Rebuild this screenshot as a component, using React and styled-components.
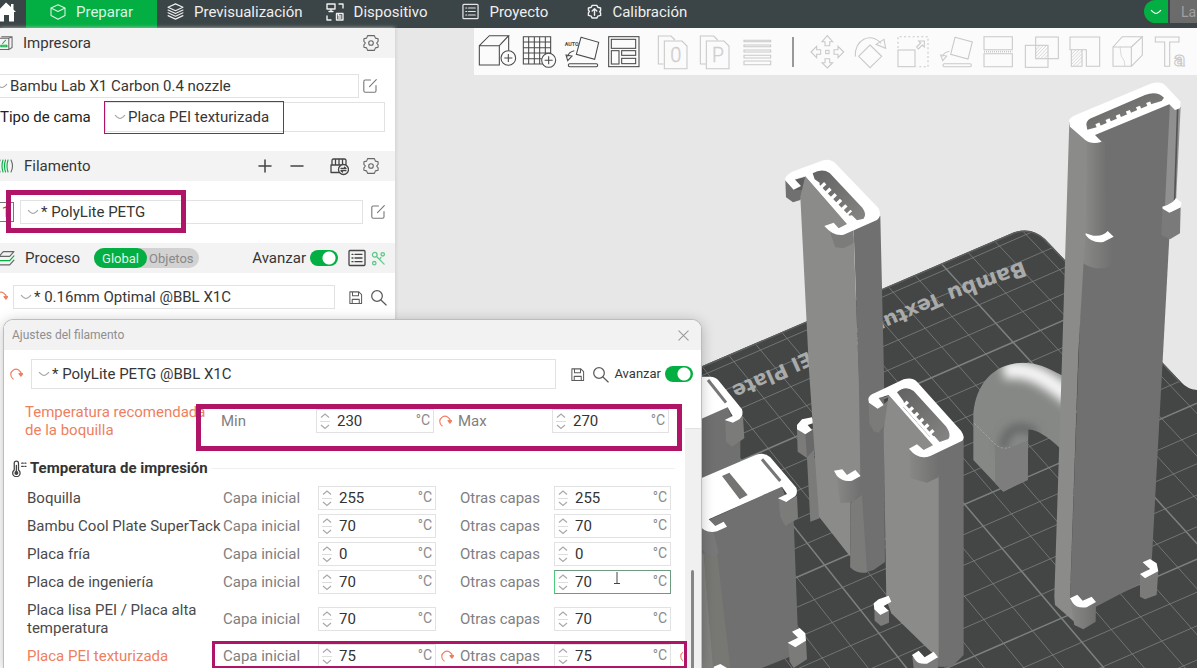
import React from "react";
import styled, { createGlobalStyle } from "styled-components";

const GREEN = "#03ae42";
const MAGENTA = "#b01466";
const ORANGE = "#ee7f61";

const GlobalStyle = createGlobalStyle`
  * { box-sizing: border-box; }
  body { margin: 0; background: #e6e6e6; }
  body, button, input, select { font-family: Roboto, "Noto Sans", sans-serif; }
  button { border: 0; padding: 0; background: none; color: inherit; cursor: pointer; }
  svg { display: block; flex: none; }
`;

const Page = styled.div`
  position: relative;
  display: flex;
  flex-direction: column;
  height: 100vh;
  overflow: hidden;
  font-size: 15px;
  line-height: 18px;
  color: #363636;
`;

/* ---------- top navigation ---------- */

const TopBar = styled.nav`
  display: flex;
  height: 28px;
  flex: none;
  background: #3b4446;
  color: #efefef;
  overflow: hidden;
`;

const HomeButton = styled.button`
  width: 26px;
  padding-bottom: 5px;
`;

const Tab = styled.button`
  display: flex;
  align-items: center;
  gap: 10px;
  padding: 0 ${(p) => p.$right || 24}px 5px ${(p) => p.$left || 0}px;
  font-size: 15px;
  line-height: 18px;
  white-space: nowrap;
  color: ${(p) => (p.$active ? "#d9f5e2" : "#efefef")};
  background: ${(p) => (p.$active ? GREEN : "transparent")};
  margin-right: ${(p) => (p.$active ? 10 : 0)}px;
`;

const SliceGroup = styled.div`
  display: flex;
  gap: 2px;
  height: 23px;
  margin-left: auto;
  flex: none;
`;

const SliceMenu = styled.button`
  display: grid;
  place-items: center;
  width: 24px;
  background: ${GREEN};
  border-radius: 12px 0 0 12px;
`;

const SliceButton = styled.button`
  width: 27px;
  padding-left: 11px;
  text-align: left;
  background: #6b6b6b;
  color: #a0a0a0;
  font-size: 14px;
`;

/* ---------- body ---------- */

const Body = styled.div`
  display: flex;
  flex: 1;
  min-height: 0;
`;

const SidebarClip = styled.aside`
  width: 395px;
  flex: none;
  overflow: hidden;
  background: #fff;
  z-index: 1;
  box-shadow: 0 0 4px #c4c4c4;
`;

const SidebarInner = styled.div`
  margin-left: -8px;
`;

const SectionHead = styled.header`
  display: flex;
  align-items: center;
  height: 30px;
  padding: 0 ${(p) => p.$right || 15}px 0 6px;
  background: #f3f3f3;
  gap: 10px;
`;

const SectionTitle = styled.h2`
  margin: 0 ${(p) => (p.$tight ? "4px" : "auto")} 0 0;
  font-size: 15px;
  font-weight: 400;
`;

const IconButton = styled.button`
  display: grid;
  place-items: center;
  width: 18px;
  height: 20px;
  margin-left: ${(p) => p.$space || 0}px;
  flex: none;
`;

const HeadActions = styled.div`
  display: flex;
  align-items: center;
  gap: 3px;
`;

const FieldRow = styled.div`
  position: relative;
  display: flex;
  align-items: center;
  padding-left: ${(p) => p.$left || 0}px;
  padding-right: ${(p) => p.$right || 16}px;
  gap: ${(p) => p.$gap || 0}px;
`;

const SectionBody = styled.div`
  display: flex;
  flex-direction: column;
  gap: 4px;
  padding: ${(p) => p.$top || 16}px 0 ${(p) => p.$bottom || 19}px;
`;

const ComboBox = styled.div`
  display: flex;
  align-items: center;
  flex: 1;
  min-width: 0;
  height: ${(p) => p.$height || 24}px;
  padding-left: ${(p) => p.$pad || 6}px;
  border: 1px solid #e2e2e2;
  background: #fff;
  gap: 2px;

  select {
    appearance: none;
    flex: 1;
    min-width: 0;
    border: 0;
    padding: 0;
    outline: 0;
    background: transparent;
    color: #363636;
    font-size: 15px;
  }
`;

const BedLabel = styled.label`
  width: 105px;
  color: #222;
`;

const Highlight = styled.span`
  position: absolute;
  pointer-events: none;
  border: ${(p) => p.$line}px solid ${MAGENTA};
  z-index: 2;
`;

const BedHighlight = styled(Highlight)`
  left: 112px;
  top: -1px;
  bottom: -2px;
  width: 180px;
`;

const FilamentHighlight = styled(Highlight)`
  left: 14px;
  top: -10px;
  bottom: -9px;
  width: 180px;
`;

const FilamentNumber = styled.span`
  display: grid;
  place-items: center;
  width: 16px;
  height: 20px;
  border: 1px solid #777;
  color: #b4571f;
`;

const Segmented = styled.div`
  display: flex;
  height: 20px;
  border-radius: 10px;
  background: #d2d2d2;
  margin-right: auto;
`;

const Segment = styled.button`
  height: 20px;
  padding: 0 ${(p) => (p.$on ? 8 : 5)}px 0 ${(p) => (p.$on ? 8 : 2)}px;
  border-radius: 10px;
  font-size: 13px;
  background: ${(p) => (p.$on ? GREEN : "transparent")};
  color: ${(p) => (p.$on ? "#dff7e6" : "#888")};
`;

const SwitchLabel = styled.label`
  display: flex;
  align-items: center;
  gap: 4px;
  font-size: ${(p) => p.$size || 15}px;

  input {
    appearance: none;
    width: 28px;
    height: 16px;
    margin: 0;
    border-radius: 8px;
    background: radial-gradient(circle at 19px 8px, #fff 6px, ${GREEN} 7px);
  }
`;

/* ---------- viewport ---------- */

const Viewport = styled.main`
  position: relative;
  flex: 1;
  min-width: 0;
  overflow: hidden;
  background: #e7e7e7;
`;

const Scene = styled.svg`
  position: absolute;
  inset: 0;
  width: 100%;
  height: 100%;
`;

const Toolbar = styled.div`
  position: relative;
  display: flex;
  align-items: center;
  height: 47px;
  margin-left: 79px;
  background: #fbfbfb;
  overflow: hidden;
`;

const ToolGroup = styled.div`
  display: flex;
  flex: none;
  margin-right: 5px;
`;

const ToolButton = styled.button`
  width: 43px;
  height: 42px;
  flex: none;
  color: ${(p) => (p.$muted ? "#c9c9c9" : "#4a4a4a")};
`;

const Separator = styled.span`
  width: 2px;
  height: 30px;
  margin: 0 12px 0 7px;
  background: #999;
  flex: none;
`;

/* ---------- dialog ---------- */

const Dialog = styled.section`
  position: absolute;
  left: 4px;
  top: 320px;
  bottom: 0;
  width: 697px;
  display: flex;
  flex-direction: column;
  border-radius: 9px 9px 0 0;
  background: #fff;
  box-shadow: 0 0 0 1px #bdbdbd, 0 2px 14px #0004;
  overflow: hidden;
  z-index: 3;
`;

const DialogTitle = styled.header`
  display: flex;
  align-items: center;
  justify-content: space-between;
  height: 30px;
  flex: none;
  padding: 0 10px 0 8px;
  background: #f2f2f2;
  color: #8f8f8f;
  font-size: 12px;
`;

const PresetRow = styled.div`
  display: flex;
  align-items: center;
  height: 48px;
  flex: none;
  padding: 0 8px 0 5px;
  gap: 8px;
`;

const PresetTools = styled.div`
  display: flex;
  align-items: center;
  gap: 5px;
  margin-left: 4px;
`;

const DialogBody = styled.div`
  display: flex;
  flex: 1;
  min-height: 0;
`;

const Settings = styled.div`
  flex: 1;
  min-width: 0;
  padding-top: 5px;
`;

const ScrollTrack = styled.div`
  width: 16px;
  margin-top: 30px;
  padding: 141px 0 0 6px;
  background: #f0f0f0;
  border-top: 1px solid #e2e2e2;
`;

const ScrollThumb = styled.div`
  width: 3px;
  height: 100%;
  background: #868686;
  border-radius: 2px 2px 0 0;
`;

const SettingRow = styled.div`
  position: relative;
  display: grid;
  grid-template-columns: 196px 95px 118px 24px 94px 117px;
  align-items: center;
  height: ${(p) => p.$height || 28}px;
  padding-left: ${(p) => p.$left || 23}px;
`;

const SettingName = styled.span`
  color: ${(p) => (p.$changed ? ORANGE : "#4a4a4a")};
  white-space: ${(p) => (p.$wrap ? "normal" : "nowrap")};
  padding-right: ${(p) => (p.$wrap ? 10 : 0)}px;
`;

const FieldLabel = styled.label`
  color: #808080;
  white-space: nowrap;
`;

const ResetSlot = styled.button`
  display: grid;
  place-items: center start;
  width: 20px;
  height: 20px;
  padding-left: 4px;
`;

const SpinBox = styled.div`
  display: flex;
  align-items: center;
  height: 24px;
  padding: 0 3px;
  border: 1px solid ${(p) => (p.$focus ? "#6d9a80" : "#e2e2e2")};
  border-left-color: ${(p) => (p.$focus ? "#4ccb7c" : "#e2e2e2")};
  background: #fff;

  input {
    flex: 1;
    width: 0;
    min-width: 0;
    border: 0;
    padding: 0 0 0 7px;
    outline: 0;
    background: transparent;
    color: #333;
    font-size: 15px;
  }
`;

const Steppers = styled.span`
  display: flex;
  flex-direction: column;
  width: 10px;

  button { height: 10px; }
  button + button { border-top: 1px solid #ddd; height: 11px; }
`;

const Unit = styled.span`
  color: #8a8a8a;
  font-size: 14px;
  padding-bottom: 2px;
`;

const GroupTitle = styled.h3`
  display: flex;
  align-items: center;
  gap: 3px;
  height: 28px;
  margin: 15px 10px 2px 6px;
  font-size: 15px;
  font-weight: 700;
  color: #333;

  &::after {
    content: "";
    flex: 1;
    height: 1px;
    background: #f0f0f0;
  }
`;

const RangeHighlight = styled(Highlight)`
  left: 192px;
  right: 3px;
  top: 1px;
  height: 47px;
`;

const PlateHighlight = styled(Highlight)`
  left: 208px;
  right: -2px;
  top: -1px;
  height: 28px;
`;

const RowReset = styled.span`
  position: absolute;
  right: 2px;
  width: 4px;
  overflow: hidden;
`;

const Beam = styled.svg`
  position: absolute;
  left: 609px;
  top: 3px;
`;

/* ---------- small icons ---------- */

const Icon = ({ size = 16, box = 16, sw = 1.1, color = "currentColor", children }) => (
  <svg width={size} height={size} viewBox={`0 0 ${box} ${box}`} fill="none" stroke={color}
    strokeWidth={sw} strokeLinecap="round" strokeLinejoin="round" aria-hidden="true">{children}</svg>
);

const Chevron = ({ color = "#a8a8a8" }) => (
  <svg width="12" height="8" viewBox="0 0 12 8" fill="none" stroke={color} strokeWidth="1.2" aria-hidden="true">
    <path d="M1 2.2 Q4 5.5 6 5.5 T11 2.2" />
  </svg>
);

const Gear = () => (
  <Icon size={18} box={18} color="#666">
    <path d="M5.6 1.6h6.8l1 2.5 2.7.6v2.6L14.6 9l1.5 1.8v2.5l-2.7.6-1 2.5H5.6l-1-2.5-2.7-.6v-2.5L3.4 9 1.9 7.3V4.7l2.7-.6z" />
    <circle cx="9" cy="9" r="2.3" />
  </Icon>
);

const EditIcon = () => (
  <Icon color="#777">
    <path d="M8.5 2H3.2Q1.8 2 1.8 3.4v9.4q0 1.4 1.4 1.4h9.4q1.4 0 1.4-1.4V7.6M7.5 8.6l6.800-7" />
  </Icon>
);

const SaveIcon = () => (
  <Icon size={15} color="#5c5c5c">
    <path d="M2 2h9.5L14.5 5v9.500H2zM4.800 2.200v4h6.400v-4M4.500 14.300V10h7.500v4.300" />
  </Icon>
);

const SearchIcon = () => (
  <Icon size={17} color="#5c5c5c" sw={1.2}><circle cx="6.6" cy="6.6" r="5" /><path d="M10.3 10.3 15.2 15" /></Icon>
);

const ResetIcon = () => (
  <Icon size={14} color={ORANGE} sw={1.3}>
    <path d="M4.8 13.600A6 6 0 1 1 14 8.400" /><path d="M11.400 7.600h4.200l-2 2.900z" fill={ORANGE} />
  </Icon>
);

const ListIcon = ({ color, size = 18 }) => (
  <Icon size={size} box={18} color={color} sw={1.3}>
    <rect x="1" y="1.5" width="16" height="15" rx="1" />
    <path d="M4 5.300h1M7 5.300h7M4 9h1M7 9h7M4 12.700h1M7 12.700h7" />
  </Icon>
);

const StepIcon = ({ up }) => (
  <svg width="10" height="9" viewBox="0 0 10 9" fill="none" stroke="#a9a9a9" strokeWidth="1.2" aria-hidden="true">
    <path d={up ? "M1 6.5 5 3l4 3.500" : "M1 3 5 6.500 9 3"} />
  </svg>
);

/* ---------- toolbar drawings ---------- */

const toolDrawings = {
  add: [223, <>
    <path d="M238 137h60v58h-60zM238 137l30-30h58l-28 30M326 107v45" />
    <circle cx="325" cy="174" r="22" fill="#fbfbfb" /><path d="M325 162v24M313 174h24" />
  </>],
  plate: [352, <>
    <path d="M370 110h82v82h-82zM386 110v82M403 110v82M419 110v82M436 110v82M370 126h82M370 143h82M370 159h82M370 176h82" />
    <circle cx="446" cy="181" r="21" fill="#fbfbfb" /><path d="M446 169v24M434 181h24" />
  </>],
  auto: [481, <>
    <path d="M543 112l53 15-12 51-55-15zM523 152q-18 4-20 18M498 165l18 3-13 14z" />
    <rect x="505" y="191" width="88" height="9" rx="4" />
    <text x="494" y="137" fontSize="16" fontWeight="700" fill="currentColor" stroke="none">AUTO</text>
  </>],
  arrange: [610, <>
    <rect x="626" y="110" width="91" height="90" /><rect x="634" y="118" width="73" height="27" />
    <rect x="634" y="152" width="23" height="40" /><rect x="665" y="152" width="42" height="14" /><rect x="665" y="175" width="42" height="16" />
  </>],
  objects: [754, <>
    <path d="M790 192h-15v-84h38l12 12M793 123h53l15 15v68h-68z" />
    <text x="811" y="187" fontSize="60" fontWeight="300" fill="#d2d2d2" strokeWidth="1">0</text>
  </>],
  parts: [883, <>
    <path d="M918 192h-17v-84h40l12 12M919 123h53l15 15v68h-68z" />
    <text x="936" y="186" fontSize="58" fontWeight="300" fill="#d2d2d2" strokeWidth="1">P</text>
  </>],
  layers: [1012, <>
    <path d="M1032 121h80v4h-80zM1032 135h80v5h-80zM1032 150h80v6h-80zM1032 166h80v8h-80zM1032 183h80v11h-80z" />
  </>],
  move: [29, <>
    <path d="M92 107l16 18h-9v12H85v-12h-9zM92 204l16-16h-9v-12H85v12h-9zM43 156l17-17v10h12v14H60v10zM141 156l-17-17v10h-12v14h12v10z" />
    <rect x="87" y="151" width="10" height="10" />
  </>],
  rotate: [158, <>
    <path d="M220 135l35 34-35 34-34-34zM176 170c-4-50 46-76 77-40M238 133l24-15 5 27z" />
  </>],
  scale: [287, <>
    <rect x="304" y="150" width="51" height="50" /><path strokeDasharray="6 7" d="M304 144v-34h90v90h-34" />
    <path d="M360 141l12-12-6-6h17v18l-6-6-12 12z" />
  </>],
  flatten: [416, <>
    <path d="M475 112l52 14-13 51-52-14zM458 154q-18 4-20 16M432 165l18 3-12 14z" /><rect x="439" y="191" width="85" height="9" rx="4" />
  </>],
  cut: [545, <>
    <path d="M562 110h85v39h-85zM562 161h85v39h-85z" /><path strokeDasharray="3 3" strokeWidth="5" d="M562 155h85" />
  </>],
  boolean: [674, <>
    <rect x="717" y="111" width="68" height="65" /><rect x="686" y="136" width="68" height="66" />
    <path strokeWidth="2" d="M717 150l13-14M717 160l23-24M717 170l33-34M722 176l32-34M732 176l22-23M742 176l12-12" />
  </>],
  support: [803, <>
    <path d="M820 149v-38h89v88h-40v-50zM824 149h32v50h-32z" />
    <path strokeWidth="2" d="M824 164l14-15M824 174l24-25M824 184l32-33M824 194l32-33M829 199l27-28M839 199l17-18" />
  </>],
  seam: [932, <>
    <path d="M949 141h55v58h-55zM949 141l28-31h60l-33 31M1037 110v55l-33 34" />
    <path strokeWidth="2" d="M970 141l4 28 8 12 3 18" />
  </>],
  text: [1061, <>
    <path d="M1076 111h71v15h-28v73h-15v-73h-28z" />
    <text x="1132" y="199" fontSize="62" fontWeight="700" fill="none">a</text>
  </>],
};

const Tool = ({ name, muted, label }) => {
  const [x, art] = toolDrawings[name];
  return (
    <ToolButton $muted={muted} aria-label={label}>
      <svg width="43" height="42" viewBox={`${x - 1} 93 129 126`} fill="none" stroke="currentColor" strokeWidth="3.2">{art}</svg>
    </ToolButton>
  );
};

/* ---------- 3D scene ---------- */

const DARK = "#707070";
const LIGHT = "#8b8b89";
const MID = "#7b7b7a";

const edgeY = (x) => 367 - 0.429 * (x - 700);
const rowLines = Array.from({ length: 22 }, (_, n) => 262 + 24.3 * n + 0.3 * n * n);
const columnLines = Array.from({ length: 34 }, (_, n) => 1021 - 26.6 * n);

const P = ({ d, f = "#fff" }) => <path d={d} fill={f} />;

const PrintScene = () => (
  <Scene viewBox="395 28 802 640" preserveAspectRatio="xMinYMin slice" aria-label="Placa de impresión">
    <defs>
      <clipPath id="bed"><path d="M395 498 L1010 234 Q1030 225 1045 239 L1181 382 Q1187 389 1197 390 V668 H395Z" /></clipPath>
      <linearGradient id="hole" x1="0" y1="0" x2="1" y2="1"><stop offset="0" stopColor="#626262" /><stop offset="1" stopColor="#858583" /></linearGradient>
      <linearGradient id="round" x1="0" x2="1"><stop offset="0" stopColor="#888886" /><stop offset="1" stopColor={DARK} /></linearGradient>
      <filter id="soft" x="-50%" y="-50%" width="200%" height="200%"><feGaussianBlur stdDeviation="14" /></filter>
      <clipPath id="archShape"><path d="M100 330V190C110 90 170 40 250 38C310 40 340 65 368 76L360 295C330 265 290 238 265 238L263 390L190 425Z" /></clipPath>
    </defs>

    <g clipPath="url(#bed)">
      <rect x="395" y="200" width="802" height="468" fill="#434645" />
      <g stroke="#7d807f" fill="none">
        {rowLines.map((y, n) => (
          <path key={y} strokeWidth={n % 5 === 4 ? 1.5 : 0.8} d={`M395 ${y + 568 * 0.435}L1197 ${y - 234 * 0.435}`} />
        ))}
        {columnLines.map((x, n) => {
          const slope = 1.22 - (x - 733) * 0.0006;
          return <path key={x} strokeWidth={n % 5 === 3 ? 1.5 : 0.8} d={`M${x} ${edgeY(x)}L${x + 450 / slope} ${edgeY(x) + 450}`} />;
        })}
      </g>
      <path d="M395 498 L1010 234 Q1030 225 1045 239 L1181 382" fill="none" stroke="#5b5e5d" strokeWidth="3" />
      <g fill="#a9abaa" fontFamily="DejaVu Sans, sans-serif" fontWeight="700" fontSize="20">
        <text transform="translate(1023 261) rotate(160)" fontSize="21">Bambu</text>
        <text transform="translate(938 292) rotate(156)">Textured</text>
        <text transform="translate(822 345) rotate(156)">PEI</text>
        <text transform="translate(784 363) rotate(156)">Plate</text>
      </g>
    </g>

    <g transform="translate(940 350) scale(.3333)">
      <P f="#868886" d="M100 330V190C110 90 170 40 250 38C310 40 340 65 368 76L360 295C330 265 290 238 265 238L263 390L190 425Z" />
      <g clipPath="url(#archShape)">
        <path d="M190 62C270 50 320 85 400 150" fill="none" stroke="#f4f5f4" strokeWidth="52" filter="url(#soft)" />
        <path d="M188 300C192 240 230 215 290 250" fill="none" stroke="#5a5c5b" strokeWidth="20" filter="url(#soft)" />
        <P f="#7c7d7c" d="M165 282Q185 300 210 294L265 270V390L190 425L165 410Z" />
      </g>
      <path d="M103 220L165 282Q185 300 210 292" fill="none" stroke="#b0b2b0" strokeWidth="2" strokeDasharray="7 5" />
    </g>

    <g transform="translate(697 370) scale(.3333)">
      <P f={MID} d="M300 175L325 193L355 178L352 262L358 270L368 445L340 455L330 264L302 245Z" />
      <P f="#696969" d="M325 193L355 178V235L330 262Z" />
      <P d="M300 165L315 148L345 142L352 158L332 165L345 180L325 193L300 178Z" />
    </g>

    <g transform="translate(697 140) scale(.3333)">
      <P f={DARK} d="M265 120L290 148L322 125V155L310 180L288 187L267 172Z" />
      <P f="#5e5e5e" d="M290 120L325 110V150L290 150Z" />
      <P f={DARK} d="M470 270L550 228L561 700L564 1266L530 1290Q480 1308 460 1280L485 690Z" />
      <P f={LIGHT} d="M325 108L450 250L470 290L485 690L490 1000L460 1090V1250L366 1130L336 690L310 170Z" />
      <P f={MID} d="M460 1090L495 1065L510 1298Q480 1302 460 1283Z" />
      <P f="#7c7c7b" d="M400 280L470 268V310L440 325L415 322Z" />
      <P d="M264 120Q265 106 285 95L375 62Q400 54 415 70L545 205Q555 230 540 240L440 284Q410 290 382 258L410 248L425 265L450 252L325 108L293 118L312 138L290 149Z" />
      <P f="url(#hole)" d="M347 100Q375 84 398 99L496 203Q510 222 500 236L480 241L465 226L452 228L367 140L368 128L353 118Z" />
      <path d="M359 132L455 232" stroke="#fff" strokeWidth="9" fill="none" />
      <path d="M374 133L458 221" stroke="#fff" strokeWidth="20" strokeDasharray="10 13" fill="none" />
    </g>

    <g transform="translate(697 370) scale(.3333)">
      <P f="url(#round)" d="M418 322L440 332L490 318V370L470 396L430 400Z" />
      <P d="M411 302L436 298L450 315L475 300L491 318L465 332Q440 338 420 318Z" />

      <P f={MID} d="M515 95L545 115L575 90V150L545 188L530 184L517 160Z" />
      <P f={DARK} d="M708 240L800 208V855L765 890L723 890V320Z" />
      <P f={LIGHT} d="M575 75L708 225L725 320V868L583 730L568 690L560 180Z" />
      <P f="url(#round)" d="M637 240L680 263L725 245V322L690 338L640 325Z" />
      <P d="M514 88Q515 75 535 68L620 28Q645 20 660 35L792 182Q806 203 796 212L700 258Q665 272 636 236L660 223L680 240L708 226L575 75L545 84L560 105L542 116L516 98Z" />
      <P f="url(#hole)" d="M600 67Q625 45 650 63L748 170Q764 195 754 207L728 216L712 198L698 200L618 110L620 94Z" />
      <path d="M600 82L708 204" stroke="#fff" strokeWidth="9" fill="none" />
      <path d="M622 98L706 192" stroke="#fff" strokeWidth="20" strokeDasharray="10 13" fill="none" />
      <P f={MID} d="M532 712L550 735L576 720V758L552 768L533 752Z" />
      <P d="M530 700L545 688L575 677L583 695L560 708L575 722L550 735L532 718Z" />
      <P f={MID} d="M646 860L690 880L723 862V894H650Z" />
      <P d="M645 855L665 842L683 862L710 845L723 862L690 881Q665 884 655 870Z" />

      <P f={DARK} d="M0 150L92 112L130 205V300L0 350Z" />
      <P f={MID} d="M85 153L108 160L138 138L142 205L105 230L87 215Z" />
      <P d="M0 20H40Q55 20 64 31L135 118Q141 137 127 148L108 158L83 150L107 138L92 112L0 152Z" />
      <path d="M33 30L87 98" stroke="#777" strokeWidth="9" />

      <P f={DARK} d="M35 450L255 350L290 450L305 850L195 894H0V480Z" />
      <P f="#82827f" d="M0 560L20 550L50 894H0Z" />
      <P f="#777774" d="M20 550L60 550L100 894H48Z" />
      <P f="#787878" d="M0 450L50 488L65 550Q50 570 25 550L0 520Z" />
      <P f={MID} d="M245 388L270 395L300 377L303 445L265 468L250 440Z" />
      <P d="M0 330L170 257Q200 244 220 262L298 353Q304 374 290 382L268 396L243 385L270 372L255 350L35 448L55 468L80 455L90 470L60 484Q25 494 0 458Z" />
      <P f="#747473" d="M75 318L97 308L152 375L128 388Z" />
      <path d="M195 268L250 333" stroke="#777" strokeWidth="9" />
      <P f={MID} d="M273 820L295 832L327 812L330 868L290 894L278 875Z" />
      <P d="M272 818L303 803L285 785L308 774L325 790L327 812L295 832Z" />
      <P d="M50 890L70 882L90 894H50Z" />
    </g>

    <g transform="translate(940 70) scale(.3333)">
      <P f={DARK} d="M440 190L690 95L692 430L635 1480L602 1540L465 1612L390 1590Z" />
      <P f={LIGHT} d="M388 155L470 215L440 500L430 590L415 850L390 1582L408 1660L345 1605L343 1580L365 900Z" />
      <P f="url(#round)" d="M440 195L495 215L500 500H438Z" />
      <P f="#909090" d="M690 100L722 112L708 400L675 405Z" />
      <path d="M713 118L704 390" stroke="#555" strokeWidth="5" />
      <P f="url(#round)" d="M437 498L516 505L517 585Q470 608 430 580Z" />
      <P d="M437 490L460 497Q490 500 503 483L521 500L490 516Q455 521 437 495Z" />
      <P f="#7a7a7a" d="M667 415L688 428L722 412L720 490L690 508L664 496Z" />
      <P d="M667 410Q700 400 708 384L725 398L722 412L688 428L668 416Z" />
      <P d="M387 152Q390 143 405 136L630 42Q660 32 675 45L722 95L720 115L705 120L688 103L465 195L485 215Q455 225 435 209L390 170Z" />
      <P f="url(#hole)" d="M439 163Q440 148 460 142L615 75Q650 61 672 83L665 93L635 102L470 172L442 179Z" />
      <path d="M465 187L685 94" stroke="#fff" strokeWidth="11" fill="none" />
      <path d="M470 172L650 97" stroke="#fff" strokeWidth="20" strokeDasharray="13 20" fill="none" />
    </g>
    <g transform="translate(940 350) scale(.3333)">
      <P f="url(#round)" d="M390 748L430 772L468 757L467 815L430 838L403 825Z" />
      <P d="M390 745L412 734L428 752L455 740L468 756L440 772Q410 776 398 758Z" />
      <P f={MID} d="M600 674L615 685L655 664L650 735L615 748L600 740Z" />
      <P d="M608 637L630 627L650 640L655 664L615 685L600 672L630 657Z" />
    </g>
  </Scene>
);

/* ---------- parts ---------- */

const Combo = ({ id, value, height, label, pad }) => (
  <ComboBox $height={height} $pad={pad}>
    <Chevron />
    <select id={id} aria-label={label} defaultValue={value}><option>{value}</option></select>
  </ComboBox>
);

const Spin = ({ id, value, focus }) => (
  <SpinBox $focus={focus}>
    <Steppers>
      <button aria-label="Aumentar"><StepIcon up /></button>
      <button aria-label="Disminuir"><StepIcon /></button>
    </Steppers>
    <input id={id} type="text" defaultValue={value} />
    <Unit>°C</Unit>
  </SpinBox>
);

const Pair = ({ id, labels, values, changed, focus }) => (
  <>
    <FieldLabel htmlFor={`${id}-a`}>{labels[0]}</FieldLabel>
    <Spin id={`${id}-a`} value={values[0]} />
    {changed ? <ResetSlot aria-label="Restablecer"><ResetIcon /></ResetSlot> : <span />}
    <FieldLabel htmlFor={`${id}-b`}>{labels[1]}</FieldLabel>
    <Spin id={`${id}-b`} value={values[1]} focus={focus} />
  </>
);

const plates = [
  { name: "Boquilla", value: "255" },
  { name: "Bambu Cool Plate SuperTack", value: "70" },
  { name: "Placa fría", value: "0" },
  { name: "Placa de ingeniería", value: "70", focus: true },
  { name: "Placa lisa PEI / Placa alta temperatura", value: "70", height: 46, wrap: true },
  { name: "Placa PEI texturizada", value: "75", changed: true },
];

export default function App() {
  return (
    <Page>
      <GlobalStyle />
      <TopBar>
        <HomeButton aria-label="Inicio">
          <svg width="18" height="23" viewBox="0 0 18 23" fill="#fff"><path d="M-3 12 6 2.500l5 4.600V4h2.500v5.500L16 12h-2v9.500H9V15H4v6.500H-3z" /></svg>
        </HomeButton>
        <Tab $active $left={24} $right={24}>
          <Icon size={16}><path d="M8 .8 15 4v7.500L8 15.200 1 11.500V4zM1.500 4.200 8 7.500l6.500-3.300" /></Icon>Preparar
        </Tab>
        <Tab $right={23}>
          <Icon size={17}><path d="M8 .8 15 4 8 7.300 1 4zM1 6.600l7 3.300 7-3.300M1 9.200l7 3.300 7-3.300M1 11.900l7 3.300 7-3.300" /></Icon>Previsualización
        </Tab>
        <Tab $right={35}>
          <Icon size={18} box={18} sw={1.4}><path d="M1 1h8v5H1zM5 6v2.500M3 8.500h4M13 1h4v4M1 13v4h4M10.500 10.500h6.500V17h-6.500zM12.500 13h2.500M12.500 15h2.500M12.500 10.500V13" /></Icon>Dispositivo
        </Tab>
        <Tab $right={39}><ListIcon color="#e6e6e6" size={17} />Proyecto</Tab>
        <Tab>
          <Icon size={15} sw={1.5}><path d="M5.500 1.500h5l1 2 3 .8v3L13.500 8l1 1.500v2.700l-3 .8-1 2h-5l-1-2-3-.8V9.500L2.500 8l-1-1.500V4.300l3-.8zM8 12V6M5.500 7.500 8 5l2.500 2.500" /></Icon>Calibración
        </Tab>
        <SliceGroup>
          <SliceMenu aria-label="Opciones de laminado"><Chevron color="#fff" /></SliceMenu>
          <SliceButton>La</SliceButton>
        </SliceGroup>
      </TopBar>

      <Body>
        <SidebarClip>
          <SidebarInner>
            <SectionHead>
              <Icon size={15} color="#666"><path d="M1 2.500h10.500v12H1zM4 .8h11v11.500l-3.500 2.200M11.500 2.500 15 .8" /><path d="M3 11.500h6.500v-1.700H3zM8 4.500 5 8" stroke={GREEN} /></Icon>
              <SectionTitle>Impresora</SectionTitle>
              <IconButton aria-label="Ajustes de impresora"><Gear /></IconButton>
            </SectionHead>
            <SectionBody>
              <FieldRow $gap={2} $right={16}>
                <Combo label="Impresora" value="Bambu Lab X1 Carbon 0.4 nozzle" pad={3} />
                <IconButton aria-label="Editar impresora"><EditIcon /></IconButton>
              </FieldRow>
              <FieldRow $left={8} $right={10}>
                <BedLabel htmlFor="bed-type">Tipo de cama</BedLabel>
                <Combo id="bed-type" height={30} value="Placa PEI texturizada" pad={8} />
                <BedHighlight $line={1} />
              </FieldRow>
            </SectionBody>

            <SectionHead>
              <Icon size={16} color="#666"><path d="M2 2Q0 8 2 14M13 2q3 6 0 12" /><path d="M5 2q-2 6 0 12M7.500 2q-2 6 0 12M10 2q-2 6 0 12" stroke={GREEN} /></Icon>
              <SectionTitle>Filamento</SectionTitle>
              <IconButton aria-label="Añadir"><Icon color="#444" sw={1.5}><path d="M8 2v12M2 8h12" /></Icon></IconButton>
              <IconButton aria-label="Quitar" $space={4}><Icon color="#444" sw={1.5}><path d="M2 8h12" /></Icon></IconButton>
              <IconButton aria-label="AMS" $space={14}>
                <Icon size={19} box={19} color="#444" sw={1.3}><path d="M16 8V3.500Q16 2 14.500 2h-11Q2 2 2 3.500V8M1 8h15M5.500 2v6M9 2v6M12.500 2v6M1 8v7.500h8" /><circle cx="13.500" cy="12.500" r="5" fill="#f3f3f3" /><path d="M11 11.500h5l-1.500-1.300M16 13.700h-5l1.500 1.300" /></Icon>
              </IconButton>
              <IconButton aria-label="Ajustes de filamento" $space={4}><Gear /></IconButton>
            </SectionHead>
            <SectionBody $top={19} $bottom={19}>
              <FieldRow $left={6} $right={8} $gap={6}>
                <FilamentNumber>1</FilamentNumber>
                <Combo label="Filamento" value="* PolyLite PETG" />
                <IconButton aria-label="Editar filamento"><EditIcon /></IconButton>
                <FilamentHighlight $line={5} />
              </FieldRow>
            </SectionBody>

            <SectionHead $right={8}>
              <Icon size={17} color="#666"><path d="M5 1.500h10L11 6H1zM1 14h10l4-4.500" /><path d="M1 10h10l4-4.500" stroke={GREEN} /></Icon>
              <SectionTitle $tight>Proceso</SectionTitle>
              <Segmented><Segment $on>Global</Segment><Segment>Objetos</Segment></Segmented>
              <SwitchLabel>Avanzar<input type="checkbox" role="switch" defaultChecked /></SwitchLabel>
              <HeadActions>
                <IconButton aria-label="Lista"><ListIcon color="#444" /></IconButton>
                <IconButton aria-label="Comparar">
                  <Icon size={15} color="#5fc98a" sw={1.4}><circle cx="4" cy="4" r="2.500" /><circle cx="12.500" cy="3.500" r="1.800" /><circle cx="3.500" cy="13" r="1.800" /><path d="M6 6l2 2M9 9l1.500-2M9.500 9.500 14 14" /></Icon>
                </IconButton>
              </HeadActions>
            </SectionHead>
            <SectionBody $top={12}>
              <FieldRow $gap={5} $left={2} $right={8}>
                <ResetIcon />
                <Combo label="Proceso" value="* 0.16mm Optimal @BBL X1C" />
                <IconButton aria-label="Guardar proceso" $space={6}><SaveIcon /></IconButton>
                <IconButton aria-label="Buscar"><SearchIcon /></IconButton>
              </FieldRow>
            </SectionBody>
          </SidebarInner>
        </SidebarClip>

        <Viewport>
          <PrintScene />
          <Toolbar>
            <ToolGroup>
              <Tool name="add" label="Añadir" /><Tool name="plate" label="Añadir placa" />
              <Tool name="auto" label="Orientar" /><Tool name="arrange" label="Organizar" />
            </ToolGroup>
            <ToolGroup>
              <Tool muted name="objects" label="Dividir en objetos" /><Tool muted name="parts" label="Dividir en partes" />
              <Tool muted name="layers" label="Altura de capa variable" />
            </ToolGroup>
            <Separator />
            <ToolGroup>
              {["move", "rotate", "scale", "flatten", "cut", "boolean", "support", "seam", "text"].map((n) => (
                <Tool key={n} muted name={n} label={n} />
              ))}
            </ToolGroup>
          </Toolbar>
        </Viewport>
      </Body>

      <Dialog role="dialog" aria-label="Ajustes del filamento">
        <DialogTitle>
          Ajustes del filamento
          <button aria-label="Cerrar"><Icon size={15} color="#999"><path d="M3 3l10 10M13 3 3 13" /></Icon></button>
        </DialogTitle>
        <PresetRow>
          <ResetIcon />
          <Combo label="Perfil de filamento" height={30} value="* PolyLite PETG @BBL X1C" />
          <PresetTools>
            <IconButton aria-label="Guardar"><SaveIcon /></IconButton>
            <IconButton aria-label="Buscar"><SearchIcon /></IconButton>
            <SwitchLabel $size={13}>Avanzar<input type="checkbox" role="switch" defaultChecked /></SwitchLabel>
          </PresetTools>
        </PresetRow>
        <DialogBody>
          <Settings>
            <SettingRow $height={36} $left={21}>
              <SettingName $changed $wrap>Temperatura recomendada de la boquilla</SettingName>
              <Pair id="range" labels={["Min", "Max"]} values={["230", "270"]} changed />
              <RangeHighlight $line={5} />
            </SettingRow>
            <GroupTitle>
              <Icon size={17} color="#444" sw={1.2}><path d="M4 9.500V3q0-2 2-2t2 2v6.500q1.500 1.200 1.500 2.700a3.500 3.500 0 0 1-7 0Q2.500 10.700 4 9.500zM6 5v6M11 3h1.500M11 6h1.500M14 3h1M14 6h1" /><circle cx="6" cy="12.200" r="1.300" fill="#444" /></Icon>
              Temperatura de impresión
            </GroupTitle>
            {plates.map((p, i) => (
              <SettingRow key={p.name} $height={p.height}>
                <SettingName $changed={p.changed} $wrap={p.wrap}>{p.name}</SettingName>
                <Pair id={`plate-${i}`} labels={["Capa inicial", "Otras capas"]} values={[p.value, p.value]} changed={p.changed} focus={p.focus} />
                {p.focus && <Beam width="8" height="14" viewBox="0 0 8 14" fill="none" stroke="#444"><path d="M4 1v11M1 12.500h6" /></Beam>}
                {p.changed && <><PlateHighlight $line={3} /><RowReset><ResetIcon /></RowReset></>}
              </SettingRow>
            ))}
          </Settings>
          <ScrollTrack><ScrollThumb /></ScrollTrack>
        </DialogBody>
      </Dialog>
    </Page>
  );
}
